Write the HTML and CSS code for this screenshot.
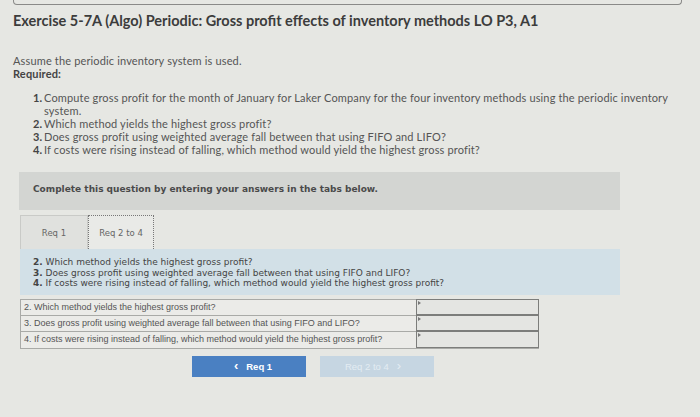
FILE: index.html
```html
<!DOCTYPE html>
<html>
<head>
<meta charset="utf-8">
<link rel="stylesheet" href="styles.css">
</head>
<body>
<div class="topbar"></div>
<h1 class="title">Exercise 5-7A (Algo) Periodic: Gross profit effects of inventory methods LO P3, A1</h1>
<div class="intro">
  <p>Assume the periodic inventory system is used.</p>
  <p class="req">Required:</p>
  <ol class="reqlist">
    <li><b>1.</b><span>Compute gross profit for the month of January for Laker Company for the four inventory methods using the periodic inventory system.</span></li>
    <li><b>2.</b><span>Which method yields the highest gross profit?</span></li>
    <li><b>3.</b><span>Does gross profit using weighted average fall between that using FIFO and LIFO?</span></li>
    <li><b>4.</b><span>If costs were rising instead of falling, which method would yield the highest gross profit?</span></li>
  </ol>
</div>
<div class="work">
  <div class="banner">Complete this question by entering your answers in the tabs below.</div>
  <div class="tabs">
    <div class="tab">Req 1</div>
    <div class="tab active">Req 2 to 4</div>
  </div>
  <div class="panel">
    <p><b>2.</b> Which method yields the highest gross profit?</p>
    <p><b>3.</b> Does gross profit using weighted average fall between that using FIFO and LIFO?</p>
    <p><b>4.</b> If costs were rising instead of falling, which method would yield the highest gross profit?</p>
  </div>
  <div class="answers">
    <div class="row"><div class="q">2. Which method yields the highest gross profit?</div><div class="a"><span class="mark"></span></div></div>
    <div class="row"><div class="q">3. Does gross profit using weighted average fall between that using FIFO and LIFO?</div><div class="a"><span class="mark"></span></div></div>
    <div class="row"><div class="q">4. If costs were rising instead of falling, which method would yield the highest gross profit?</div><div class="a"><span class="mark"></span></div></div>
  </div>
  <div class="nav">
    <div class="btn prev"><span class="chev">&lsaquo;</span> Req 1</div>
    <div class="btn next">Req 2 to 4 <span class="chev">&rsaquo;</span></div>
  </div>
</div>
</body>
</html>
```
FILE: styles.css
```css
* { box-sizing: border-box; }
body {
  margin: 0;
  background: #e6e7e3;
  font-family: Lato, "Open Sans", sans-serif;
  color: #4a4a4a;
}
p { margin: 0; }
.topbar {
  margin: 0 18px 0 13px;
  height: 5px;
  border: 1px solid #8a8a88;
  border-top: none;
  border-radius: 0 0 4px 4px;
}
.title {
  margin: 7px 0 0 13px;
  font-size: 14.5px;
  line-height: 17px;
  font-weight: 700;
  color: #3c3c3c;
}
.intro {
  margin: 25px 0 0 13px;
  font-size: 11px;
  line-height: 13px;
  letter-spacing: 0.15px;
  color: #555;
}
.req { font-weight: 700; color: #444; }
.reqlist {
  list-style: none;
  margin: 11px 0 0 0;
  padding: 0 0 0 20px;
  width: 665px;
}
.reqlist li { display: flex; }
.reqlist li b { width: 11px; flex: none; color: #444; }
.work {
  margin: 16px 0 0 19px;
  width: 601px;
}
.banner {
  height: 38px;
  background: #d3d5d2;
  font-family: "DejaVu Sans", Verdana, sans-serif;
  font-weight: 700;
  font-size: 9px;
  color: #4a4a4a;
  padding: 12px 0 0 14px;
}
.tabs {
  display: flex;
  margin-top: 5px;
  height: 34px;
  padding-left: 1px;
}
.tab {
  width: 68px;
  height: 34px;
  background: #e0e1de;
  border: 1px solid #c9cac7;
  border-bottom: none;
  font-family: "DejaVu Sans", Verdana, sans-serif;
  font-size: 8.5px;
  color: #666;
  display: flex;
  align-items: center;
  justify-content: center;
}
.tab.active {
  width: 66px;
  background: #e9eae7;
  border: 1px dotted #777;
  border-bottom: none;
}
.panel {
  margin-left: 1px;
  height: 46px;
  background: #d2e0e7;
  padding: 8px 0 0 13px;
  font-family: "DejaVu Sans", Verdana, sans-serif;
  font-size: 9px;
  line-height: 10.5px;
  color: #444;
}
.answers {
  margin: 4px 0 0 1px;
  width: 519px;
  border: 1px solid #a9aaa7;
}
.row {
  display: flex;
  height: 16px;
  border-bottom: 1px solid #a9aaa7;
}
.row:last-child { border-bottom: none; }
.q {
  width: 395px;
  font-family: "Liberation Sans", Arial, sans-serif;
  font-size: 9px;
  line-height: 15px;
  padding-left: 3px;
  color: #555;
  background: #ebebe8;
  white-space: nowrap;
}
.a {
  flex: 1;
  border: 1px solid #7c7d7b;
  margin: -1px -1px 0 0;
  background: #e4e5e2;
  position: relative;
}
.mark {
  position: absolute;
  left: 1px;
  top: 1px;
  width: 0; height: 0;
  border-left: 3px solid #777;
  border-top: 2px solid transparent;
  border-bottom: 2px solid transparent;
}
.nav {
  display: flex;
  gap: 14px;
  margin: 7px 0 0 173px;
}
.btn {
  width: 114px;
  height: 21px;
  display: flex;
  align-items: center;
  justify-content: center;
  font-family: "Liberation Sans", Arial, sans-serif;
  font-size: 9.5px;
  font-weight: 700;
}
.btn .chev { font-size: 13px; margin: 0 8px; line-height: 1; position: relative; top: -1px; }
.prev { background: #4a80c2; color: #fff; }
.next { background: #c6d6e2; color: #e3ecf2; font-weight: 400; }
```
